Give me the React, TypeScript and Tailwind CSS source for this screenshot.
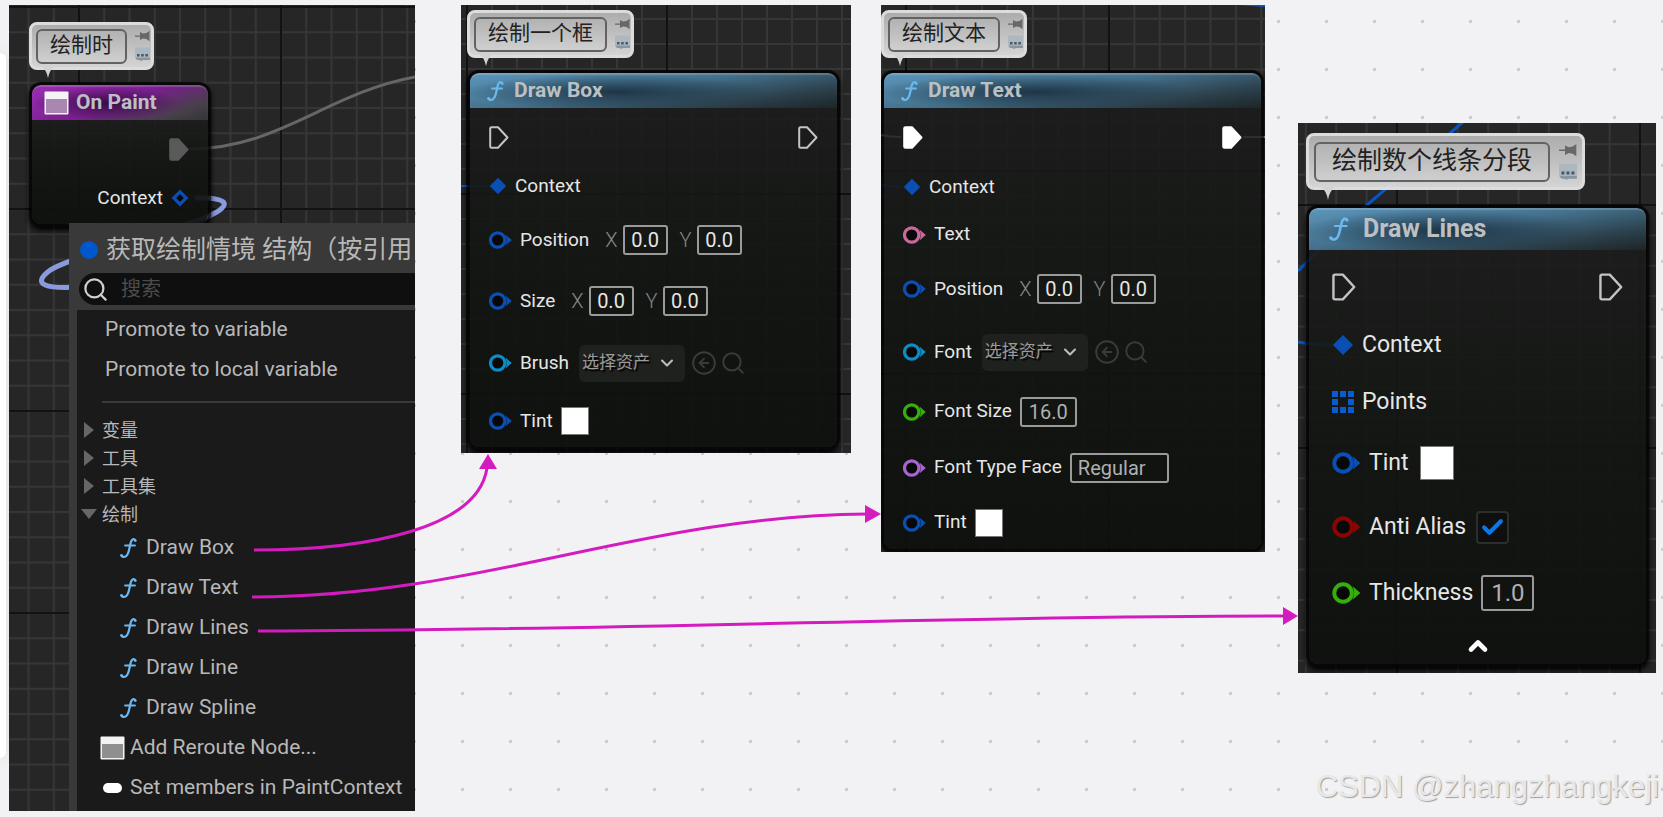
import type { ReactNode } from "react";
import { Check, ChevronDown, ChevronUp, CircleArrowLeft, Search } from "lucide-react";
import { clsx } from "clsx";

type Size = "md" | "lg";

const BLUE = "#0a4fb4";
const CYAN = "#0a8cc8";
const GREEN = "#35b00a";

/* ---------- icons ---------- */

function FunctionIcon({ className }: { className?: string }) {
  return (
    <svg viewBox="0 0 17 20" fill="none" stroke="#6cb9f0" strokeLinecap="round" className={className}>
      <path d="M15.6 2.6C15.4 1 13.3.7 12 2 10.800 3.300 10.300 5.800 9.600 9.500 8.800 13.800 8 17.400 5.600 18.500 4 19.200 1.900 19.100 1.400 17.400" strokeWidth="2.200" />
      <path d="M5 7.500H15" strokeWidth="1.800" />
      <circle cx="1.700" cy="17.600" r="0.800" strokeWidth="1.200" />
      <circle cx="15" cy="2.400" r="0.600" strokeWidth="1.200" />
    </svg>
  );
}

function WindowIcon({ fill }: { fill: string }) {
  return (
    <svg viewBox="0 0 25 24" className="h-6 w-[25px] shrink-0">
      <rect x="0.500" y="0.500" width="24" height="23" rx="1" fill="#f4f4f4" />
      <rect x="2" y="8" width="21" height="14" fill={fill} />
    </svg>
  );
}

function ExecPin({ size = "md", tone = "outline" }: { size?: Size; tone?: "outline" | "white" | "dim" }) {
  const fill = { outline: "none", white: "#ffffff", dim: "#5a5a5a" }[tone];
  const stroke = { outline: "#c4c4c4", white: "#ffffff", dim: "#5a5a5a" }[tone];
  return (
    <svg viewBox="0 0 20 23" className={size === "lg" ? "h-[28px] w-6" : "h-[23px] w-5"}>
      <path d="M2.500 1.200H9L18.500 11.500 9 21.800H2.500Q1.200 21.800 1.200 20.500V2.500Q1.200 1.200 2.500 1.200Z" fill={fill} stroke={stroke} strokeWidth="2" strokeLinejoin="round" />
    </svg>
  );
}

function RingPin({ color, size = "md" }: { color: string; size?: Size }) {
  return (
    <svg viewBox="0 0 23 18" className={clsx("shrink-0", size === "lg" ? "h-[22px] w-[29px]" : "h-[18px] w-[23px]")}>
      <circle cx="8.700" cy="9" r="7.200" fill="#080808" stroke={color} strokeWidth="3.200" />
      <path d="M16.500 3.500 22.800 9 16.500 14.500Q18.800 9 16.500 3.500Z" fill={color} />
    </svg>
  );
}

function StructPin({ size = "md", hollow = false }: { size?: Size; hollow?: boolean }) {
  return (
    <svg viewBox="0 0 18 18" className={clsx("shrink-0", size === "lg" ? "h-[22px] w-[22px]" : "h-[18px] w-[18px]")}>
      {hollow ? (
        <path d="M9 2.800 15.200 9 9 15.200 2.800 9Z" fill="#080808" stroke={BLUE} strokeWidth="3.200" />
      ) : (
        <path d="M9 .8 17.200 9 9 17.200 .8 9Z" fill={BLUE} />
      )}
    </svg>
  );
}

function ArrayPin() {
  const cells = [0, 1, 2, 3, 5, 6, 7, 8];
  return (
    <svg viewBox="0 0 22 22" className="h-[22px] w-[22px] shrink-0">
      {cells.map((c) => (
        <rect key={c} x={(c % 3) * 8} y={Math.floor(c / 3) * 8} width="6" height="6" fill="#0a5bd0" />
      ))}
    </svg>
  );
}

/* ---------- graph background ---------- */

type GridProps = { id: string; major: number; x: number; y: number; children?: ReactNode };

function Grid({ id, major, x, y, children }: GridProps) {
  const cell = major / 8;
  return (
    <svg className="absolute inset-0 h-full w-full" aria-hidden="true">
      <defs>
        <pattern id={`${id}-minor`} x={x - 1} y={y - 1} width={cell} height={cell} patternUnits="userSpaceOnUse">
          <rect width={cell} height="2" fill="#363636" />
          <rect width="2" height={cell} fill="#363636" />
        </pattern>
        <pattern id={`${id}-major`} x={x - 1} y={y - 1} width={major} height={major} patternUnits="userSpaceOnUse">
          <rect width={major} height="2" fill="#121212" />
          <rect width="2" height={major} fill="#121212" />
        </pattern>
      </defs>
      <rect width="100%" height="100%" fill={`url(#${id}-minor)`} />
      <rect width="100%" height="100%" fill={`url(#${id}-major)`} />
      <g fill="none">{children}</g>
    </svg>
  );
}

/* ---------- node parts ---------- */

function Comment({ text, size = "md" }: { text: string; size?: Size }) {
  const lg = size === "lg";
  return (
    <div
      className={clsx(
        "relative flex w-fit items-center rounded-lg border-[3px] border-[#e6e6e6] bg-linear-to-b from-[#b4b4b4] to-[#dedede] opacity-95",
        lg ? "mb-[15px] h-[57px] gap-[9px] px-[5px]" : "mb-3 h-12 gap-2 pr-px pl-1",
      )}
    >
      <input
        type="text"
        aria-label="Comment"
        defaultValue={text}
        className={clsx(
          "field-sizing-content rounded-md border-2 border-[#666] bg-transparent text-[#222] outline-none",
          lg ? "h-10 px-4 pb-2 text-[25px] leading-8" : "h-[35px] px-3 pb-1.5 text-[21px] leading-6",
        )}
      />
      <svg viewBox="0 0 15 32" className={lg ? "h-[38px] w-[18px]" : "h-8 w-[15px]"}>
        <path d="M0 5.500H5V2L8 3.500 11.500 3 14.500.8V11.200L11.500 9 8 8.500 5 10V6.800H0Z" fill="#6c6c6c" />
        <rect y="17.500" width="15" height="10" fill="#b4bfc8" />
        <path d="M0 27.500H15V30H8L6 31 4.500 30H2Z" fill="#8f9ca6" />
        <path d="M2 24H4.500V26.500H2ZM6.200 24H8.700V26.500H6.200ZM10.400 24H12.900V26.500H10.400Z" fill="#4b5a68" />
      </svg>
      <svg viewBox="0 0 12 11" className={clsx("absolute top-full", lg ? "left-3 h-[13px] w-[14px]" : "left-2.5 h-[11px] w-3")}>
        <path d="M0 0H12Q7.500 3 6 11 4.500 3 0 0Z" fill="#dcdcdc" />
      </svg>
    </div>
  );
}

type NodeProps = {
  title: string;
  icon: ReactNode;
  size?: Size;
  headerClass?: string;
  className?: string;
  rows: string;
  children: ReactNode;
};

const blueHeader =
  "bg-[radial-gradient(ellipse_42%_50%_at_40%_54%,#1c3242f2,transparent),linear-gradient(172deg,#5c96bb_0%,#44718d_45%,#2b3f4a_78%,#1d2528_100%)]";
const purpleHeader =
  "bg-[radial-gradient(ellipse_42%_48%_at_42%_52%,#340a40e6,transparent),linear-gradient(160deg,#9a2fb4_0%,#7a1f8f_50%,#46404a_82%,#333533_100%)]";

function GraphNode({ title, icon, size = "md", headerClass = blueHeader, className, rows, children }: NodeProps) {
  const lg = size === "lg";
  return (
    <article className={clsx("overflow-hidden rounded-xl border-[3px] border-black/80 shadow-md shadow-black", className)}>
      <header
        className={clsx(
          "flex items-center rounded-t-lg font-bold text-[#bcc0c2] shadow-[inset_0_2px_1px_#ffffff2e]",
          headerClass,
          lg ? "h-[42px] gap-3.5 pl-5 text-[25px]" : "h-[35px] text-[21px]",
          !lg && (headerClass === purpleHeader ? "gap-[7px] pl-3" : "gap-2.5 pl-[17px]"),
        )}
      >
        {icon}
        <h2>{title}</h2>
      </header>
      <div
        className={clsx(
          "grid bg-linear-to-b from-[#1a1b1ae0] via-[#111411e8] to-[#0e100eee] text-[#e6e6e6]",
          lg ? "px-[23px] text-[23px]" : "pr-[19px] pl-[19px] text-[19px]",
          rows,
        )}
      >
        {children}
      </div>
    </article>
  );
}

function ExecRow({ size = "md", tone = "outline" }: { size?: Size; tone?: "outline" | "white" }) {
  return (
    <div className="flex items-center justify-between">
      <ExecPin size={size} tone={tone} />
      <ExecPin size={size} tone={tone} />
    </div>
  );
}

function Row({ pin, label, htmlFor, children }: { pin: ReactNode; label: string; htmlFor?: string; children?: ReactNode }) {
  return (
    <div className="flex items-center">
      {pin}
      {htmlFor ? (
        <label htmlFor={htmlFor} className="ml-2">{label}</label>
      ) : (
        <span className="ml-2">{label}</span>
      )}
      {children}
    </div>
  );
}

const fieldClass = "rounded-[3px] border-2 border-[#9a9a9a] bg-transparent outline-none";

function Vector({ name }: { name: string }) {
  return (
    <div role="group" aria-label={name} className="ml-4 flex gap-3">
      {["X", "Y"].map((axis) => (
        <label key={axis} className="flex items-center gap-[5px] text-[20px] font-light text-[#888]">
          {axis}
          <input type="text" defaultValue="0.0" className={clsx(fieldClass, "h-[30px] w-[45px] text-center font-normal text-[#e6e6e6]")} />
        </label>
      ))}
    </div>
  );
}

function AssetPicker({ id }: { id: string }) {
  return (
    <div className="ml-2.5 flex items-center">
      <div className="relative flex items-center">
        <select
          id={id}
          className="h-[37px] w-[106px] appearance-none rounded-md bg-[#1f211f] pl-[3px] text-[17px] text-[#9a9a9a] outline-none [text-shadow:2px_2px_1px_#000]"
        >
          <option>选择资产</option>
        </select>
        <ChevronDown className="pointer-events-none absolute right-2 h-5 w-5 text-[#bdbdbd]" strokeWidth={2.500} />
      </div>
      <button type="button" aria-label="Use selected asset" className="ml-1.5 text-[#3a3a3a]">
        <CircleArrowLeft className="h-[26px] w-[26px]" strokeWidth={1.800} />
      </button>
      <button type="button" aria-label="Browse to asset" className="ml-[3px] text-[#3a3a3a]">
        <Search className="h-[26px] w-[26px]" strokeWidth={1.800} />
      </button>
    </div>
  );
}

function Swatch({ size = "md" }: { size?: Size }) {
  return (
    <button
      type="button"
      aria-label="Tint color"
      className={clsx("border border-[#777] bg-white", size === "lg" ? "ml-[11px] h-[34px] w-[34px]" : "ml-2 h-7 w-7")}
    />
  );
}

/* ---------- context menu ---------- */

const categories = ["变量", "工具", "工具集", "绘制"];
const drawCalls = ["Draw Box", "Draw Text", "Draw Lines", "Draw Line", "Draw Spline"];

function ContextMenu() {
  const item = "flex h-10 w-full items-center text-left text-[21px] whitespace-nowrap";
  return (
    <div className="relative -mt-1 ml-[60px] bg-[#393939] pl-2 text-[#b8b8b8]">
      <div className="flex h-[50px] items-center gap-2 overflow-hidden pt-1 pl-[3px]">
        <span className="h-[18px] w-[18px] shrink-0 rounded-full bg-[#0057cc]" />
        <span className="text-[25px] whitespace-nowrap">获取绘制情境 结构（按引用</span>
      </div>
      <label className="ml-0.5 flex h-8 items-center gap-3 rounded-l-full bg-[#0f0f0f] pl-[3px]">
        <Search className="h-[27px] w-[27px] shrink-0 text-[#cfcfcf]" strokeWidth={2} />
        <input type="search" aria-label="搜索" placeholder="搜索" className="w-full min-w-0 bg-transparent text-[20px] outline-none placeholder:text-[#4c4c4c]" />
      </label>
      <div className="mt-[5px] bg-[#1a1a1a] pb-[3px]">
        <button type="button" className={clsx(item, "pl-7")}>Promote to variable</button>
        <button type="button" className={clsx(item, "pl-7")}>Promote to local variable</button>
        <hr className="mt-[11px] mb-[13px] ml-[25px] border-t-2 border-[#3a3a3a]" />
        {categories.map((name) => {
          const open = name === "绘制";
          return (
            <button key={name} type="button" aria-expanded={open} className="flex h-7 w-full items-center gap-[5px] pl-1 text-[18px]">
              <svg viewBox="0 0 16 16" className="h-4 w-4" fill="#666">
                {open ? <path d="M0 3H16L8 13Z" /> : <path d="M3 0 13 8 3 16Z" />}
              </svg>
              {name}
            </button>
          );
        })}
        {drawCalls.map((name) => (
          <button key={name} type="button" className={clsx(item, "gap-[9px] pl-[43px]")}>
            <FunctionIcon className="h-5 w-[17px]" />
            {name}
          </button>
        ))}
        <button type="button" className={clsx(item, "gap-[5px] pl-[23px]")}>
          <WindowIcon fill="#8f8f8f" />
          Add Reroute Node...
        </button>
        <button type="button" className={clsx(item, "gap-2 pl-[26px]")}>
          <span className="h-2.5 w-[19px] rounded-full bg-white" />
          Set members in PaintContext
        </button>
      </div>
    </div>
  );
}

/* ---------- page ---------- */

const panel = "relative shrink-0 overflow-hidden bg-[#262626]";

export default function App() {
  return (
    <main className="relative min-h-screen w-full overflow-hidden bg-[#f2f2f5] bg-[conic-gradient(at_3px_3px,transparent_75%,#cdcdd0_0)] bg-size-[48px_48px] bg-position-[29px_20px] font-['Roboto','Noto_Sans_CJK_SC',sans-serif]">
      <div className="absolute top-[53px] bottom-[59px] left-0 w-1.5 rounded-r-lg bg-white shadow-[0_0_14px_#00000026]" />

      <div className="flex items-start pt-[5px] pl-[9px]">
        <section className={clsx(panel, "mr-[46px] w-[406px]")}>
          <Grid id="paint" major={202} x={70} y={2}>
            <path d="M180 144C270 144 318 88 406 72" stroke="#666" strokeWidth="3" />
            <path d="M186 193C220 192 224 200 200 211 178 222 58 252 40 266 22 280 38 284 70 282" stroke="#8a9bdd" strokeWidth="5" />
          </Grid>
          <div className="relative pt-[17px] pl-5">
            <Comment text="绘制时" />
            <GraphNode title="On Paint" icon={<WindowIcon fill="#a888b0" />} headerClass={purpleHeader} className="w-[182px]" rows="grid-rows-[59px_38px] pb-[7px]">
              <div className="flex items-center justify-end">
                <ExecPin tone="dim" />
              </div>
              <div className="flex items-center justify-end gap-2">
                <span>Context</span>
                <StructPin hollow />
              </div>
            </GraphNode>
          </div>
          <ContextMenu />
        </section>

        <section className={clsx(panel, "mr-[30px] w-[390px]")}>
          <Grid id="box" major={200} x={206} y={189}>
            <path d="M0 181H30" stroke="#0a55c4" strokeWidth="2" />
          </Grid>
          <div className="relative pt-[5px] pr-[11px] pb-[3px] pl-1.5">
            <Comment text="绘制一个框" />
            <GraphNode title="Draw Box" icon={<FunctionIcon className="h-5 w-[17px]" />} rows="grid-rows-[59px_38px_70px_52px_72px_44px] pb-1">
              <ExecRow />
              <Row pin={<StructPin />} label="Context" />
              <Row pin={<RingPin color={BLUE} />} label="Position">
                <Vector name="Position" />
              </Row>
              <Row pin={<RingPin color={BLUE} />} label="Size">
                <Vector name="Size" />
              </Row>
              <Row pin={<RingPin color={CYAN} />} label="Brush" htmlFor="brush">
                <AssetPicker id="brush" />
              </Row>
              <Row pin={<RingPin color={BLUE} />} label="Tint">
                <Swatch />
              </Row>
            </GraphNode>
          </div>
        </section>

        <section className={clsx(panel, "mr-[33px] w-[384px]")}>
          <Grid id="text" major={203} x={25} y={166}>
            <path d="M0 130Q8 132 20 132M362 132H384" stroke="#c0c0c0" strokeWidth="2" />
            <path d="M0 179Q8 182 20 182M356 -1 384 1" stroke="#0a55c4" strokeWidth="2" />
          </Grid>
          <div className="relative pt-[5px] pr-px">
            <Comment text="绘制文本" />
            <GraphNode title="Draw Text" icon={<FunctionIcon className="h-5 w-[17px]" />} rows="grid-rows-[59px_40px_55px_54px_72px_47px_65px_45px] pb-1">
              <ExecRow tone="white" />
              <Row pin={<StructPin />} label="Context" />
              <Row pin={<RingPin color="#c9699a" />} label="Text" />
              <Row pin={<RingPin color={BLUE} />} label="Position">
                <Vector name="Position" />
              </Row>
              <Row pin={<RingPin color={CYAN} />} label="Font" htmlFor="font">
                <AssetPicker id="font" />
              </Row>
              <Row pin={<RingPin color={GREEN} />} label="Font Size" htmlFor="font-size">
                <input id="font-size" type="text" defaultValue="16.0" className={clsx(fieldClass, "ml-2 h-[30px] w-[57px] text-center text-[20px] text-[#b0b0b0]")} />
              </Row>
              <Row pin={<RingPin color="#a864d0" />} label="Font Type Face" htmlFor="type-face">
                <input id="type-face" type="text" defaultValue="Regular" className={clsx(fieldClass, "ml-2 h-[30px] w-[99px] pl-1.5 text-[20px] text-[#b0b0b0]")} />
              </Row>
              <Row pin={<RingPin color={BLUE} />} label="Tint">
                <Swatch />
              </Row>
            </GraphNode>
          </div>
        </section>

        <section className={clsx(panel, "mt-[118px] w-[358px]")}>
          <Grid id="lines" major={243} x={99} y={82}>
            <path d="M0 148C30 118 60 88 100 56L166 -2" stroke="#0a55c4" strokeWidth="3" />
            <path d="M0 219Q12 222 36 222" stroke="#0a55c4" strokeWidth="3" />
          </Grid>
          <div className="relative pt-2.5 pr-[7px] pb-1.5 pl-2">
            <Comment text="绘制数个线条分段" size="lg" />
            <GraphNode title="Draw Lines" size="lg" icon={<FunctionIcon className="h-6 w-5" />} rows="grid-rows-[74px_42px_72px_50px_78px_54px_44px]">
              <ExecRow size="lg" />
              <Row pin={<StructPin size="lg" />} label="Context" />
              <Row pin={<ArrayPin />} label="Points" />
              <Row pin={<RingPin size="lg" color={BLUE} />} label="Tint">
                <Swatch size="lg" />
              </Row>
              <Row pin={<RingPin size="lg" color="#8c0505" />} label="Anti Alias" htmlFor="anti-alias">
                <span className="relative ml-2.5 flex">
                  <input id="anti-alias" type="checkbox" defaultChecked className="h-[33px] w-[33px] appearance-none rounded-[4px] border-2 border-[#2c2e2c] bg-[#0e0f0e]" />
                  <Check className="pointer-events-none absolute inset-1 h-[25px] w-[25px] text-[#0a78e8]" strokeWidth={4} />
                </span>
              </Row>
              <Row pin={<RingPin size="lg" color={GREEN} />} label="Thickness" htmlFor="thickness">
                <input id="thickness" type="text" defaultValue="1.0" className={clsx(fieldClass, "ml-2 h-9 w-[53px] text-center text-[24px] text-[#b0b0b0]")} />
              </Row>
              <button type="button" aria-label="Collapse" className="flex items-center justify-center pt-2 text-white">
                <ChevronUp className="h-7 w-7" strokeWidth={4} />
              </button>
            </GraphNode>
          </div>
        </section>
      </div>

      {/* Arrows from the menu entries to their nodes */}
      <svg className="pointer-events-none absolute inset-0 h-full w-full" aria-hidden="true">
        <g fill="none" stroke="#d41bc0" strokeWidth="3">
          <path d="M254 550C370 550 478 528 487 468" />
          <path d="M252 597C480 597 640 516 867 514" />
          <path d="M258 631C600 631 940 616 1284 616" />
        </g>
        <g fill="#d41bc0">
          <path d="M488 454 497 469H479Z" />
          <path d="M881 514 865 523V505Z" />
          <path d="M1298 616 1283 625V607Z" />
        </g>
      </svg>

      <p className="absolute right-1 bottom-3 font-['Liberation_Sans',sans-serif] text-[31px] leading-9 text-[#e8e8e8] [text-shadow:1px_1px_1px_#a0a0a0]">
        CSDN @zhangzhangkeji
      </p>
    </main>
  );
}
